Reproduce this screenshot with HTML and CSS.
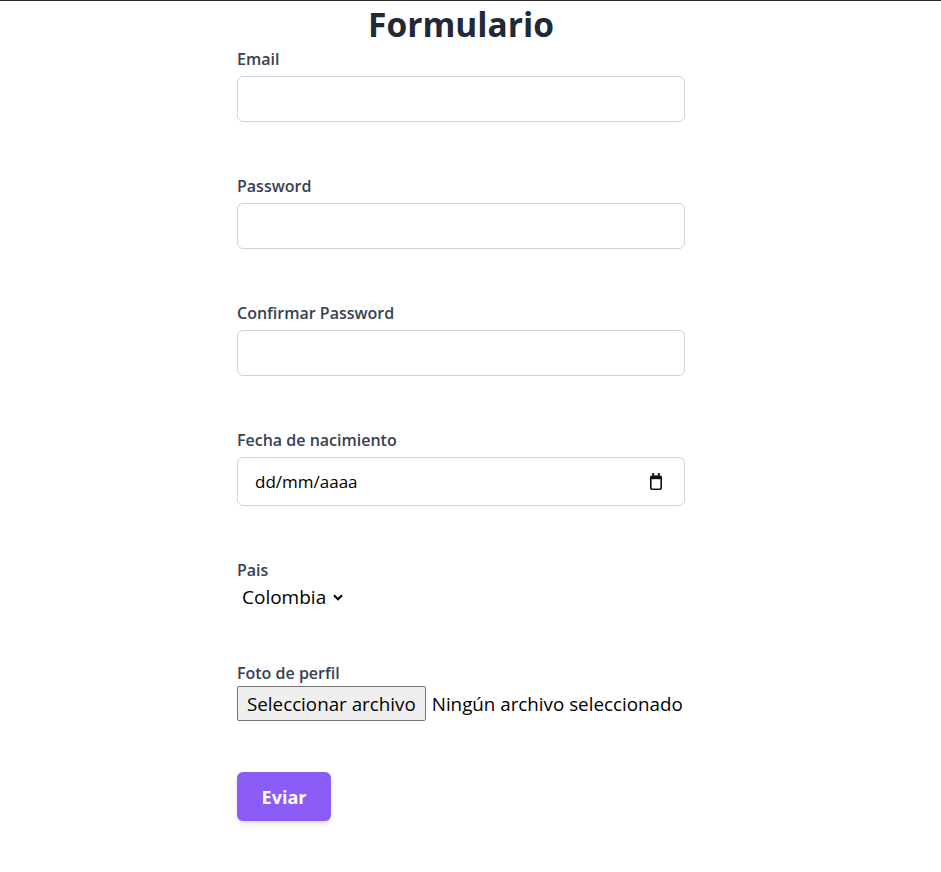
FILE: index.html
```html
<!DOCTYPE html>
<html lang="es">
<head>
<meta charset="utf-8">
<title>Formulario</title>
<link rel="stylesheet" href="styles.css">
</head>
<body>
<div class="page">
  <form class="form">
    <h1 class="title">Formulario</h1>
    <div class="field">
      <label class="label" for="email">Email</label>
      <input class="input" id="email" type="email">
    </div>
    <div class="field">
      <label class="label" for="pass">Password</label>
      <input class="input" id="pass" type="password">
    </div>
    <div class="field">
      <label class="label" for="pass2">Confirmar Password</label>
      <input class="input" id="pass2" type="password">
    </div>
    <div class="field">
      <label class="label">Fecha de nacimiento</label>
      <div class="date">
        <span>dd/mm/aaaa</span>
        <svg class="cal" width="12" height="17" viewBox="0 0 12 17"><rect x="2.3" y="0" width="1.8" height="4" fill="#111"/><rect x="7.9" y="0" width="1.8" height="4" fill="#111"/><rect x="0.8" y="3.3" width="10.4" height="12.9" rx="1" fill="none" stroke="#111" stroke-width="1.6"/><rect x="0.8" y="3.3" width="10.4" height="2.9" fill="#111"/></svg>
      </div>
    </div>
    <div class="field">
      <label class="label label-tight">Pais</label>
      <div class="select">
        <span>Colombia</span>
        <svg width="10" height="7" viewBox="0 0 10 7"><polyline points="1,1.2 5,5.3 9,1.2" fill="none" stroke="#000" stroke-width="2"/></svg>
      </div>
    </div>
    <div class="field field-file">
      <label class="label label-file">Foto de perfil</label>
      <div class="file">
        <span class="file-btn">Seleccionar archivo</span>
        <span class="file-name">Ningún archivo seleccionado</span>
      </div>
    </div>
    <button class="submit" type="button">Eviar</button>
  </form>
</div>
</body>
</html>
```
FILE: styles.css
```css
* { box-sizing: border-box; }
body {
  margin: 0;
  font-family: "Open Sans", "Noto Sans", sans-serif;
  background: #fff;
}
.page {
  border-top: 1px solid #2a2a2a;
  display: flex;
  justify-content: center;
  padding-right: 19px;
}
.form {
  width: 448px;
  display: flex;
  flex-direction: column;
  padding-bottom: 40px;
}
.title {
  margin: 0 0 3px;
  padding-top: 3px;
  font-size: 33.5px;
  line-height: 40px;
  font-weight: 700;
  color: #1f2937;
  text-align: center;
}
.field {
  display: flex;
  flex-direction: column;
  margin-bottom: 52px;
}
.field-file { margin-bottom: 51px; }
.label {
  font-size: 16px;
  line-height: 24px;
  font-weight: 600;
  color: #374151;
  margin-bottom: 5px;
}
.label-tight { margin-bottom: 3px; }
.label-file { margin-bottom: 1px; }
.input {
  height: 46px;
  border: 1px solid #cbd5e1;
  border-radius: 6px;
  padding: 0 16px;
  font: inherit;
  background: #fff;
  outline: none;
}
.date {
  height: 49px;
  border: 1px solid #cbd5e1;
  border-radius: 6px;
  display: flex;
  align-items: center;
  justify-content: space-between;
  padding: 0 22px 0 17px;
  font-size: 17px;
  color: #000;
}
.cal { display: block; }
.select {
  display: flex;
  align-items: center;
  gap: 7px;
  height: 24px;
  line-height: 24px;
  font-size: 19px;
  padding-left: 5px;
  color: #000;
}
.file {
  display: flex;
  align-items: center;
  gap: 6px;
  font-size: 18.8px;
  color: #000;
  white-space: nowrap;
}
.file-btn {
  flex-shrink: 0;
  height: 35px;
  display: flex;
  align-items: center;
  padding: 0 9px;
  background: #efefef;
  border: 1px solid #767676;
  border-radius: 2px;
}
.file-name { flex-shrink: 0; }
.submit {
  align-self: flex-start;
  width: 94px;
  height: 49px;
  background: #8b5cf6;
  color: #fff;
  font-family: inherit;
  font-weight: 700;
  font-size: 18px;
  border: none;
  border-radius: 6px;
  box-shadow: 0 4px 6px -1px rgba(0,0,0,.1), 0 2px 4px -2px rgba(0,0,0,.1);
}
```
